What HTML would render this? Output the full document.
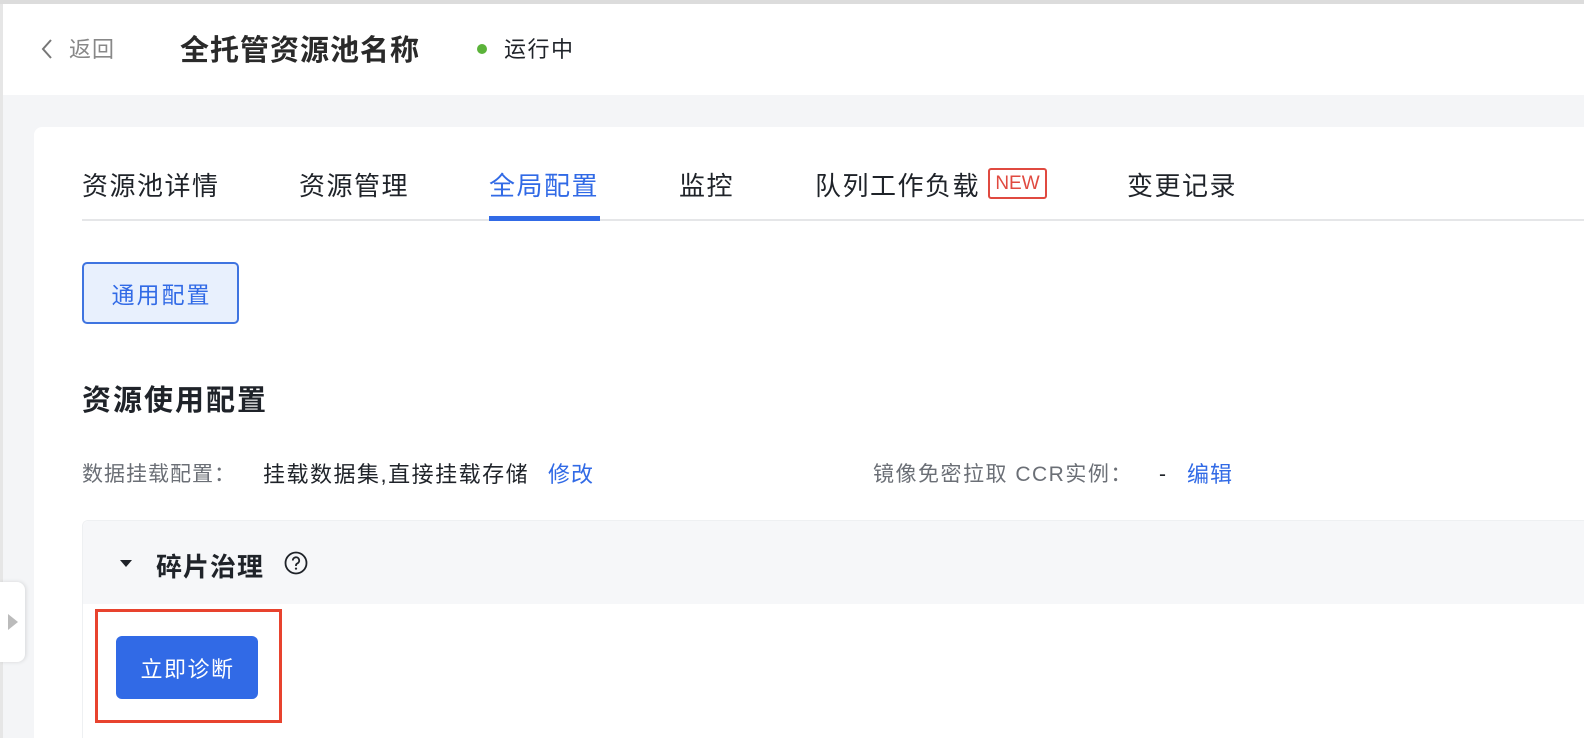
<!DOCTYPE html>
<html><head><meta charset="utf-8"><style>
*{margin:0;padding:0;box-sizing:border-box}
html,body{width:1584px;height:738px;overflow:hidden}
body{background:#f4f5f7;font-family:"Liberation Sans","Noto Sans CJK SC",sans-serif;position:relative;color:#1f2329}
.abs{position:absolute;white-space:nowrap}
</style></head><body>
<div class="abs" style="left:0;top:0;width:1584px;height:4px;background:#dcdcdc"></div>
<div class="abs" style="left:0;top:4px;width:1584px;height:91px;background:#fff;border-left:3px solid #e6e6e6"></div>
<svg class="abs" style="left:40px;top:38px" width="14" height="22" viewBox="0 0 14 22"><path d="M11 2 L3 11 L11 20" fill="none" stroke="#777" stroke-width="2"/></svg>
<div class="abs" style="left:69px;top:36px;font-size:22px;letter-spacing:1px;color:#888;line-height:28px">返回</div>
<div class="abs" style="left:180px;top:33px;font-size:29px;letter-spacing:1px;font-weight:bold;color:#2a2a2a;line-height:36px">全托管资源池名称</div>
<div class="abs" style="left:477px;top:44px;width:10px;height:10px;border-radius:50%;background:#5bb33a"></div>
<div class="abs" style="left:504px;top:36px;font-size:22px;letter-spacing:1.5px;color:#1f2329;line-height:28px">运行中</div>
<div class="abs" style="left:0;top:95px;width:3px;height:643px;background:#e6e6e6"></div>
<div class="abs" style="left:34px;top:127px;width:1560px;height:611px;background:#fff;border-radius:8px 0 0 0"></div>
<div class="abs" style="left:82px;top:219px;width:1502px;height:2px;background:#e5e6e8"></div>
<div class="abs" style="left:82px;top:169px;font-size:26px;letter-spacing:1.5px;line-height:34px;color:#1f2329">资源池详情</div>
<div class="abs" style="left:299px;top:169px;font-size:26px;letter-spacing:1.5px;line-height:34px;color:#1f2329">资源管理</div>
<div class="abs" style="left:489px;top:169px;font-size:26px;letter-spacing:1.5px;line-height:34px;color:#316ae6">全局配置</div>
<div class="abs" style="left:489px;top:216px;width:111px;height:5px;background:#316ae6"></div>
<div class="abs" style="left:679px;top:169px;font-size:26px;letter-spacing:1.5px;line-height:34px;color:#1f2329">监控</div>
<div class="abs" style="left:815px;top:169px;font-size:26px;letter-spacing:1.5px;line-height:34px;color:#1f2329">队列工作负载</div>
<div class="abs" style="left:988px;top:168px;width:59px;height:31px;border:2px solid #e04a40;border-radius:3px;color:#e04a40;font-size:19px;line-height:27px;text-align:center">NEW</div>
<div class="abs" style="left:1127px;top:169px;font-size:26px;letter-spacing:1.5px;line-height:34px;color:#1f2329">变更记录</div>
<div class="abs" style="left:82px;top:262px;width:157px;height:62px;background:#e8f0fd;border:2px solid #3f74e0;border-radius:5px;color:#316ae6;font-size:23px;letter-spacing:2px;padding-left:2px;padding-top:4px;line-height:54px;text-align:center">通用配置</div>
<div class="abs" style="left:82px;top:383px;font-size:29px;letter-spacing:2px;font-weight:bold;line-height:36px;color:#1f2329">资源使用配置</div>
<div class="abs" style="left:82px;top:461px;font-size:21px;letter-spacing:1px;line-height:28px;color:#6b6f76">数据挂载配置：</div>
<div class="abs" style="left:263px;top:461px;font-size:22px;letter-spacing:1.5px;line-height:28px;color:#1f2329">挂载数据集,直接挂载存储</div>
<div class="abs" style="left:548px;top:461px;font-size:22px;letter-spacing:1px;line-height:28px;color:#316ae6">修改</div>
<div class="abs" style="left:873px;top:461px;font-size:21px;letter-spacing:1.5px;line-height:28px;color:#6b6f76">镜像免密拉取 CCR实例：</div>
<div class="abs" style="left:1159px;top:461px;font-size:21px;line-height:28px;color:#1f2329">-</div>
<div class="abs" style="left:1187px;top:461px;font-size:22px;letter-spacing:1px;line-height:28px;color:#316ae6">编辑</div>
<div class="abs" style="left:82px;top:520px;width:1502px;height:218px;border:1px solid #eef0f2;border-right:none;border-bottom:none;border-radius:6px 0 0 0;background:#fff"></div>
<div class="abs" style="left:83px;top:521px;width:1501px;height:83px;background:#f6f7f9;border-radius:6px 0 0 0"></div>
<svg class="abs" style="left:120px;top:560px" width="12" height="8"><path d="M0 0 L12 0 L6 7Z" fill="#1f2329"/></svg>
<div class="abs" style="left:156px;top:549px;font-size:26px;letter-spacing:1px;font-weight:bold;line-height:36px;color:#1f2329">碎片治理</div>
<svg class="abs" style="left:284px;top:551px" width="24" height="24" viewBox="0 0 24 24"><circle cx="12" cy="12" r="10.5" fill="none" stroke="#1f2329" stroke-width="1.8"/><path d="M8.8 9.5a3.2 3.2 0 1 1 4.5 2.9c-.9.4-1.3 1-1.3 2v.6" fill="none" stroke="#1f2329" stroke-width="1.8"/><circle cx="12" cy="17.6" r="1.1" fill="#1f2329"/></svg>
<div class="abs" style="left:95px;top:609px;width:187px;height:114px;border:3px solid #e8432e"></div>
<div class="abs" style="left:116px;top:636px;width:142px;height:63px;background:#316ae6;border-radius:6px;color:#fff;font-size:22px;letter-spacing:1.5px;padding-left:1px;padding-top:5px;line-height:58px;text-align:center">立即诊断</div>
<div class="abs" style="left:0;top:582px;width:25px;height:80px;background:#fff;border-radius:0 8px 8px 0;box-shadow:1px 0 4px rgba(0,0,0,.12)"></div>
<svg class="abs" style="left:8px;top:614px" width="10" height="16"><path d="M0 0 L10 8 L0 16Z" fill="#bbb"/></svg>
</body></html>
